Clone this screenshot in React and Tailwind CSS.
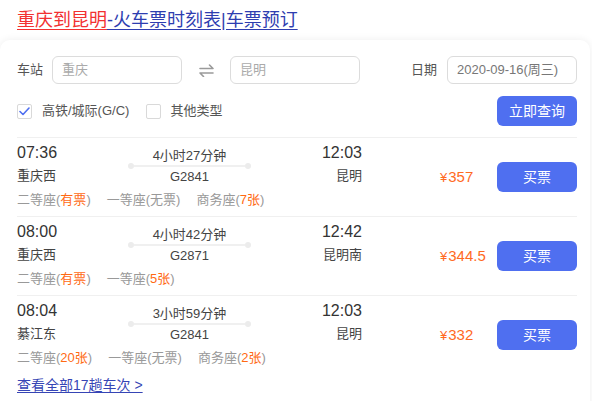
import React from 'react';

const trains = [
  {
    dep: '07:36',
    from: '重庆西',
    duration: '4小时27分钟',
    no: 'G2841',
    arr: '12:03',
    to: '昆明',
    price: '357',
    seats: [
      { name: '二等座', left: '有票', hot: true },
      { name: '一等座', left: '无票', hot: false },
      { name: '商务座', left: '7张', hot: true },
    ],
  },
  {
    dep: '08:00',
    from: '重庆西',
    duration: '4小时42分钟',
    no: 'G2871',
    arr: '12:42',
    to: '昆明南',
    price: '344.5',
    seats: [
      { name: '二等座', left: '有票', hot: true },
      { name: '一等座', left: '5张', hot: true },
    ],
  },
  {
    dep: '08:04',
    from: '綦江东',
    duration: '3小时59分钟',
    no: 'G2841',
    arr: '12:03',
    to: '昆明',
    price: '332',
    seats: [
      { name: '二等座', left: '20张', hot: true },
      { name: '一等座', left: '无票', hot: false },
      { name: '商务座', left: '2张', hot: true },
    ],
  },
];

const SwapIcon = () => (
  <svg width="15" height="13" viewBox="0 0 15 13" fill="none" stroke="#9a9a9a" strokeWidth="1.6" strokeLinecap="round" strokeLinejoin="round">
    <path d="M1 4.5h13L10.5 1" />
    <path d="M14 9H1l3.5 3.5" />
  </svg>
);

const Checkbox = ({ checked }) => (
  <span className="w-[15px] h-[15px] rounded-[2px] border border-[#d9d9d9] bg-white flex items-center justify-center">
    {checked && (
      <svg width="11" height="9" viewBox="0 0 11 9" fill="none" stroke="#4f6ff0" strokeWidth="1.6" strokeLinecap="round" strokeLinejoin="round">
        <path d="M1 4.5l3 3L10 1" />
      </svg>
    )}
  </span>
);

const TrainRow = ({ train }) => (
  <div className="flex h-[79px] border-t border-[#f0f0f0]">
    <div className="w-[423px] pt-[5px]">
      <div className="flex">
        <div className="w-[111px] text-[#333]">
          <div className="text-[16px] leading-[20px]">{train.dep}</div>
          <div className="mt-[3px] text-[13px] leading-[20px] text-[#444]">{train.from}</div>
        </div>
        <div className="w-[123px] text-[13px] text-[#444] text-center">
          <div className="mt-[4px] leading-[18px]">{train.duration}</div>
          <div className="relative h-[2px] mx-[3px] bg-[#f0f0f0]">
            <span className="absolute left-[-3px] top-[-2px] w-[6px] h-[6px] rounded-full bg-[#ececec]" />
            <span className="absolute right-[-3px] top-[-2px] w-[6px] h-[6px] rounded-full bg-[#ececec]" />
          </div>
          <div className="leading-[20px]">{train.no}</div>
        </div>
        <div className="w-[111px] text-right text-[#333]">
          <div className="text-[16px] leading-[20px]">{train.arr}</div>
          <div className="mt-[3px] text-[13px] leading-[20px] text-[#444]">{train.to}</div>
        </div>
      </div>
      <div className="mt-[3px] flex gap-[16px] text-[13px] leading-[20px] text-[#999]">
        {train.seats.map((s) => (
          <span key={s.name}>
            {s.name}(<span className={s.hot ? 'text-[#ff6a14]' : ''}>{s.left}</span>)
          </span>
        ))}
      </div>
    </div>
    <div className="w-[57px] self-center text-[#ff6a1f] leading-[20px]">
      <span className="text-[13px] mr-[1px]">¥</span>
      <span className="text-[15px]">{train.price}</span>
    </div>
    <button className="self-center w-[80px] h-[30px] rounded-[6px] bg-[#4f6ff0] text-white text-[14px]">
      买票
    </button>
  </div>
);

export default function App() {
  return (
    <div className="w-[592px] h-[401px] overflow-hidden bg-white font-['Liberation_Sans','Noto_Sans_CJK_SC',sans-serif]">
      <h1 className="px-[17px] pt-[8px] text-[18px] leading-[24px] font-normal">
        <a className="text-[#f23131] underline underline-offset-[3px]">重庆到昆明</a>
        <a className="text-[#2e3db0] underline underline-offset-[3px]">-火车票时刻表|车票预订</a>
      </h1>

      <div className="mt-[8px] mr-[2px] rounded-[10px] shadow-[0_0_8px_rgba(0,0,0,0.07)] pl-[17px] pr-[13px] pt-[16px] pb-[20px]">
        <div className="flex items-center h-[28px] text-[13px]">
          <span className="w-[35px] text-[#555]">车站</span>
          <div className="w-[130px] h-[28px] border border-[#dcdcdc] rounded-[6px] px-[9px] flex items-center text-[#aaa]">
            重庆
          </div>
          <div className="w-[48px] flex justify-center">
            <SwapIcon />
          </div>
          <div className="w-[130px] h-[28px] border border-[#dcdcdc] rounded-[6px] px-[9px] flex items-center text-[#aaa]">
            昆明
          </div>
          <span className="ml-auto mr-[10px] text-[#555]">日期</span>
          <div className="w-[130px] h-[28px] border border-[#dcdcdc] rounded-[6px] px-[9px] flex items-center text-[#777]">
            2020-09-16(周三)
          </div>
        </div>

        <div className="mt-[12px] flex items-center justify-between h-[30px] text-[13px] text-[#555]">
          <div className="flex items-center">
            <Checkbox checked />
            <span className="ml-[10px]">高铁/城际(G/C)</span>
            <span className="ml-[17px]">
              <Checkbox />
            </span>
            <span className="ml-[9px]">其他类型</span>
          </div>
          <button className="w-[80px] h-[30px] rounded-[6px] bg-[#4f6ff0] text-white text-[14px]">
            立即查询
          </button>
        </div>

        <div className="mt-[11px]">
          {trains.map((t, i) => (
            <TrainRow key={i} train={t} />
          ))}
        </div>

        <a className="block mt-[1px] text-[14px] leading-[20px] text-[#3645b5] underline underline-offset-[2px]">
          查看全部17趟车次 &gt;
        </a>
      </div>
    </div>
  );
}
